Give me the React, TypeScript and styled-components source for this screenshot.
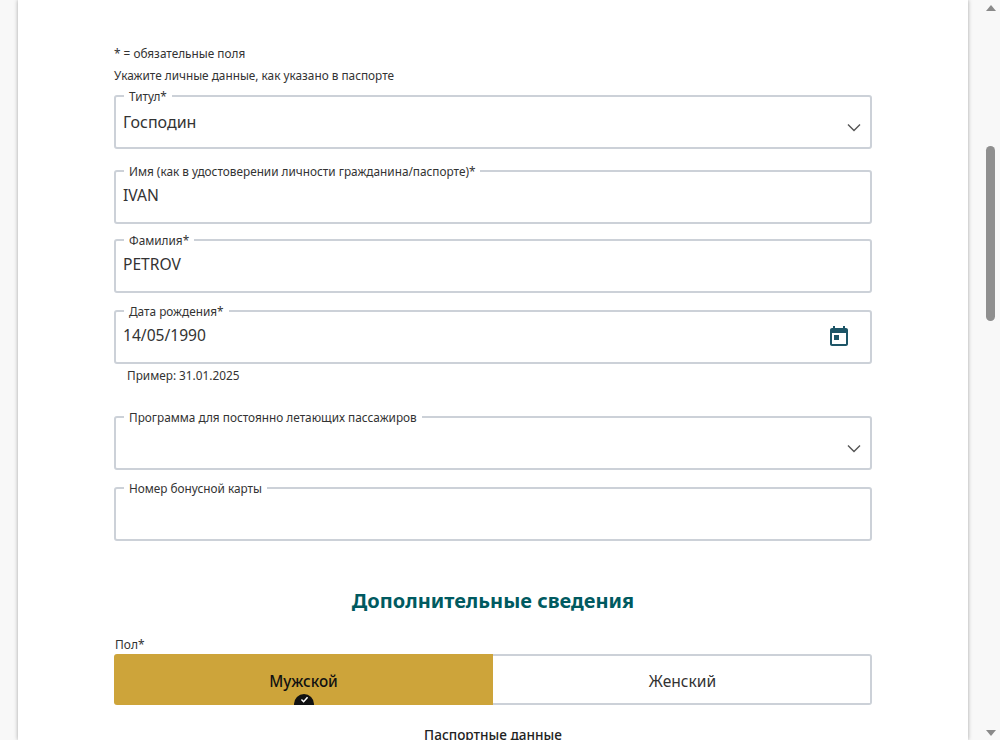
import React from "react";
import styled, { createGlobalStyle } from "styled-components";

const Global = createGlobalStyle`
  html, body { margin: 0; padding: 0; height: 740px; overflow: hidden; background: #fff; }
  body { font-family: "Noto Sans", "Liberation Sans", sans-serif; color: #2b2b2b; }
  * { box-sizing: border-box; }
`;

const Page = styled.div`
  display: flex;
  width: 1000px;
  height: 740px;
  overflow: hidden;
  background: #f8f8f8;
`;
const Card = styled.main`
  width: 950px;
  margin-left: 18px;
  height: 740px;
  background: #fff;
  padding: 45px 96px 0;
  box-shadow: 0 0 4px rgba(0, 0, 0, 0.35);
  flex: none;
`;
const Spacer = styled.div`
  flex: 1;
`;
const Scrollbar = styled.div`
  width: 17px;
  height: 740px;
  flex: none;
  display: flex;
  flex-direction: column;
  align-items: center;
  padding: 5px 2px 4px 0;
`;
const Arrow = styled.div<{ $down?: boolean }>`
  width: 0;
  height: 0;
  border-left: 5px solid transparent;
  border-right: 5px solid transparent;
  ${(p) => (p.$down ? "border-top: 6px solid #8a8a8a;" : "border-bottom: 6px solid #8a8a8a;")}
`;
const Thumb = styled.div`
  width: 9px;
  height: 175px;
  margin-top: 135px;
  border-radius: 5px;
  background: #8f8f8f;
`;
const Note = styled.p<{ $gap?: number }>`
  margin: 0 0 ${(p) => p.$gap ?? 0}px;
  font-size: 11.8px;
  line-height: 16px;
  color: #333;
`;
const Field = styled.fieldset<{ $gap?: number }>`
  position: relative;
  margin: 0 0 ${(p) => p.$gap ?? 0}px;
  padding: 0 7px;
  height: 60px;
  border: 2px solid #ccd1d8;
  border-radius: 3px;
  min-width: 0;
`;
const Legend = styled.legend`
  margin-left: 1px;
  padding: 0 5px;
  font-size: 11.8px;
  line-height: 14px;
  height: 14px;
  color: #333;
`;
const Value = styled.div<{ $top: number; $size?: number }>`
  margin-top: ${(p) => p.$top}px;
  font-size: ${(p) => p.$size ?? 16}px;
  line-height: 22px;
  color: #333;
`;
const FieldIcon = styled.svg`
  position: absolute;
  display: block;
`;
const Chevron = styled(FieldIcon)`
  right: 9px;
  top: 20px;
`;
const Calendar = styled(FieldIcon)`
  right: 19px;
  top: 7px;
`;
const Hint = styled.div`
  margin: 2px 0 0 13px;
  font-size: 11.8px;
  line-height: 18px;
  height: 44px;
  color: #333;
`;
const Heading = styled.h2`
  margin: 46px 0 22px;
  text-align: center;
  font-size: 20px;
  line-height: 28px;
  font-weight: 700;
  color: #005a60;
`;
const GenderLabel = styled.div`
  margin-left: 1px;
  font-size: 12px;
  line-height: 16px;
  color: #333;
`;
const Segments = styled.div`
  display: flex;
  height: 51px;
  margin-top: 1px;
`;
const Segment = styled.div<{ $active?: boolean }>`
  position: relative;
  flex: none;
  width: 50%;
  display: flex;
  align-items: center;
  justify-content: center;
  overflow: hidden;
  padding: ${(p) => (p.$active ? "3px 0 0" : "2px 0 0 2px")};
  font-size: ${(p) => (p.$active ? 15.3 : 15.6)}px;
  font-weight: ${(p) => (p.$active ? 500 : 400)};
  color: ${(p) => (p.$active ? "#111" : "#333")};
  background: ${(p) => (p.$active ? "#cda43a" : "#fff")};
  border: ${(p) => (p.$active ? "none" : "2px solid #ccd1d8")};
  border-left: none;
  border-radius: ${(p) => (p.$active ? "3px 0 0 3px" : "0 3px 3px 0")};
`;
const Badge = styled.span`
  position: absolute;
  left: 180px;
  top: 40px;
  width: 20px;
  height: 20px;
  border-radius: 50%;
  background: #111;
  display: flex;
  justify-content: center;
  padding-top: 2px;
`;
const SubHeading = styled.div`
  margin-top: 20px;
  text-align: center;
  font-size: 13.6px;
  line-height: 20px;
  font-weight: 500;
  color: #222;
`;

const ChevronIcon = () => (
  <Chevron width="14" height="9" viewBox="0 0 14 9" fill="none">
    <path d="M1 1.5 7 7.5 13 1.5" stroke="#555" strokeWidth="1.4" />
  </Chevron>
);

const TodayIcon = () => (
  <Calendar width="24" height="24" viewBox="0 0 24 24" fill="#1d5567">
    <path d="M19 3h-1V1h-2v2H8V1H6v2H5c-1.11 0-1.99.9-1.99 2L3 19c0 1.1.89 2 2 2h14c1.1 0 2-.9 2-2V5c0-1.1-.9-2-2-2zm0 16H5V8h14v11zM7 10h5v5H7z" />
  </Calendar>
);

export default function App() {
  return (
    <Page>
      <Global />
      <Card>
        <Note $gap={6}>* = обязательные поля</Note>
        <Note $gap={6}>Укажите личные данные, как указано в паспорте</Note>
        <Field $gap={15}>
          <Legend>Титул*</Legend>
          <Value $top={8}>Господин</Value>
          <ChevronIcon />
        </Field>
        <Field $gap={9}>
          <Legend>Имя (как в удостоверении личности гражданина/паспорте)*</Legend>
          <Value $top={6} $size={15.6}>IVAN</Value>
        </Field>
        <Field $gap={11}>
          <Legend>Фамилия*</Legend>
          <Value $top={6} $size={15.6}>PETROV</Value>
        </Field>
        <Field>
          <Legend>Дата рождения*</Legend>
          <Value $top={6} $size={15.6}>14/05/1990</Value>
          <TodayIcon />
        </Field>
        <Hint>Пример: 31.01.2025</Hint>
        <Field $gap={11}>
          <Legend>Программа для постоянно летающих пассажиров</Legend>
          <ChevronIcon />
        </Field>
        <Field>
          <Legend>Номер бонусной карты</Legend>
        </Field>
        <Heading>Дополнительные сведения</Heading>
        <GenderLabel>Пол*</GenderLabel>
        <Segments>
          <Segment $active>
            Мужской
            <Badge>
              <svg width="9" height="7" viewBox="0 0 10 8" fill="none">
                <path d="M1.5 4 4 6.5 8.5 1.5" stroke="#fff" strokeWidth="1.8" />
              </svg>
            </Badge>
          </Segment>
          <Segment>Женский</Segment>
        </Segments>
        <SubHeading>Паспортные данные</SubHeading>
      </Card>
      <Spacer />
      <Scrollbar>
        <Arrow />
        <Thumb />
        <Spacer />
        <Arrow $down />
      </Scrollbar>
    </Page>
  );
}
